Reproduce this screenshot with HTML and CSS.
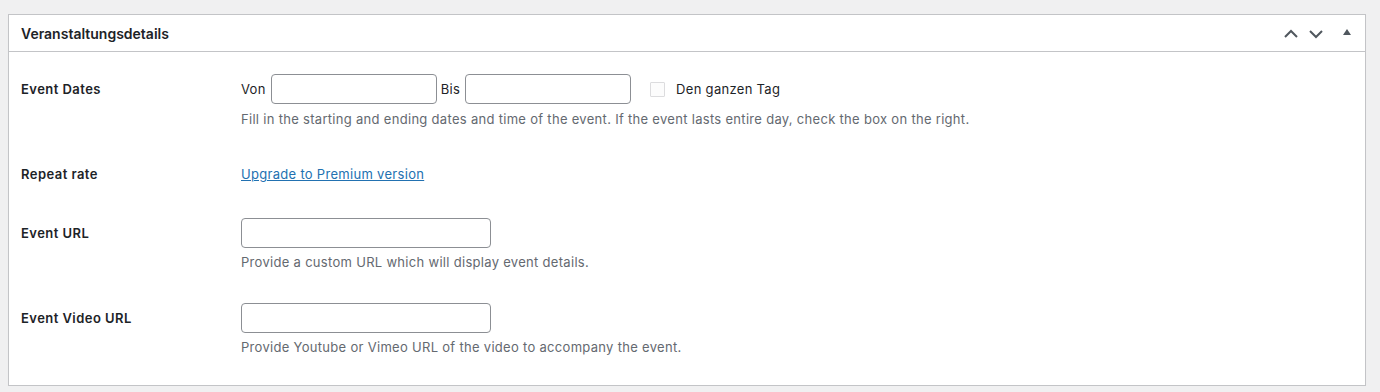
FILE: index.html
```html
<!DOCTYPE html>
<html lang="de">
<head>
    <meta charset="UTF-8">
    <meta name="viewport" content="width=device-width, initial-scale=1.0">
    <title>Veranstaltungsdetails</title>
    <link rel="stylesheet" href="styles.css">
</head>
<body>
    <div class="postbox">
        <div class="postbox-header">
            <h2 class="hndle">Veranstaltungsdetails</h2>
            <div class="handle-actions">
                <button class="handle-btn" type="button" aria-label="Nach oben verschieben">
                    <svg width="14" height="10" viewBox="0 0 14 10"><polyline points="1,8 7,2 13,8" fill="none" stroke="#50575e" stroke-width="2"/></svg>
                </button>
                <button class="handle-btn" type="button" aria-label="Nach unten verschieben">
                    <svg width="14" height="10" viewBox="0 0 14 10"><polyline points="1,2 7,8 13,2" fill="none" stroke="#50575e" stroke-width="2"/></svg>
                </button>
                <button class="handle-btn toggle" type="button" aria-label="Bedienfeld umschalten">
                    <svg width="10" height="8" viewBox="0 0 10 8"><polygon points="1,7 5,1 9,7" fill="#50575e"/></svg>
                </button>
            </div>
        </div>
        <div class="inside">
            <div class="field-row dates-row">
                <div class="field-label">Event Dates</div>
                <div class="field-body">
                    <div class="date-line">
                        <span>Von</span>
                        <input type="text" class="date-input">
                        <span>Bis</span>
                        <input type="text" class="date-input">
                        <label class="allday"><input type="checkbox" class="check"> Den ganzen Tag</label>
                    </div>
                    <p class="description">Fill in the starting and ending dates and time of the event. If the event lasts entire day, check the box on the right.</p>
                </div>
            </div>
            <div class="field-row repeat-row">
                <div class="field-label">Repeat rate</div>
                <div class="field-body">
                    <a href="#" class="upgrade-link">Upgrade to Premium version</a>
                </div>
            </div>
            <div class="field-row url-row">
                <div class="field-label">Event URL</div>
                <div class="field-body">
                    <input type="text" class="url-input">
                    <p class="description">Provide a custom URL which will display event details.</p>
                </div>
            </div>
            <div class="field-row">
                <div class="field-label">Event Video URL</div>
                <div class="field-body">
                    <input type="text" class="url-input">
                    <p class="description">Provide Youtube or Vimeo URL of the video to accompany the event.</p>
                </div>
            </div>
        </div>
    </div>
</body>
</html>
```

FILE: styles.css
```css
body {
    margin: 0;
    padding: 14px 14px 0 8px;
    background: #f0f0f1;
    font-family: Inter, "Liberation Sans", Arial, sans-serif;
    font-size: 13px;
    letter-spacing: 0.3px;
    color: #1d2327;
}
.postbox {
    background: #fff;
    border: 1px solid #c3c4c7;
    box-shadow: 0 1px 1px rgba(0, 0, 0, 0.04);
}
.postbox-header {
    display: flex;
    align-items: center;
    justify-content: space-between;
    box-sizing: border-box;
    height: 37px;
    border-bottom: 1px solid #c3c4c7;
    padding: 2px 13px 0 12px;
}
.hndle {
    margin: 0;
    font-size: 14px;
    font-weight: 600;
    line-height: 1.4;
    letter-spacing: 0;
}
.handle-actions {
    display: flex;
    align-items: center;
    gap: 11px;
}
.handle-btn {
    border: none;
    background: none;
    padding: 0;
    width: 14px;
    height: 30px;
    display: flex;
    align-items: center;
    justify-content: center;
    cursor: pointer;
}
.handle-btn.toggle {
    width: 10px;
    margin-left: 8px;
    padding-bottom: 4px;
}
.inside {
    padding: 22px 12px 28px;
}
.field-row {
    display: grid;
    grid-template-columns: 220px 1fr;
    margin-top: 31px;
}
.dates-row {
    margin-top: 0;
}
.repeat-row {
    margin-top: 30px;
}
.url-row {
    margin-top: 29px;
}
.field-label {
    font-weight: 600;
    line-height: 30px;
    letter-spacing: 0.45px;
}
.field-body {
    line-height: 30px;
}
.date-line {
    display: flex;
    align-items: center;
    height: 30px;
}
.date-input,
.url-input {
    box-sizing: border-box;
    height: 30px;
    border: 1px solid #8c8f94;
    border-radius: 4px;
    background: #fff;
    padding: 0 8px;
    font: inherit;
    display: block;
}
.date-input {
    width: 166px;
    margin: 0 4px 0 5px;
}
.url-input {
    width: 250px;
}
.allday {
    display: flex;
    align-items: center;
    margin-left: 11px;
}
.check {
    appearance: none;
    width: 15px;
    height: 15px;
    margin: 0 11px 0 4px;
    border: 1px solid #dcdcde;
    border-radius: 1px;
    background: #fcfcfc;
}
.description {
    margin: 4px 0 0;
    color: #646970;
    line-height: 20px;
}
.dates-row .description {
    margin-top: 5px;
}
.upgrade-link {
    color: #2271b1;
    text-decoration: underline;
}
```
